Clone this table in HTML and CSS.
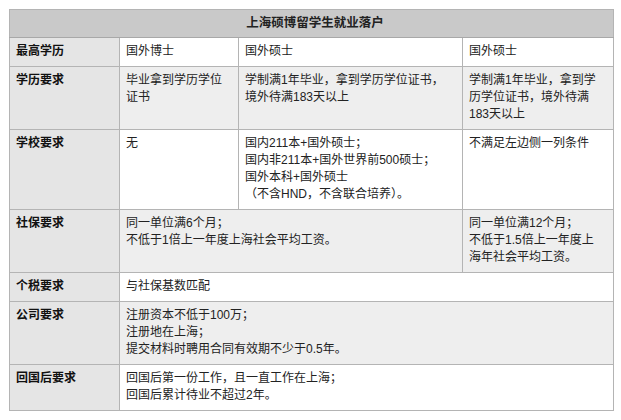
FILE: index.html
```html
<!DOCTYPE html>
<html lang="zh-CN">
<head>
<meta charset="utf-8">
<title>上海硕博留学生就业落户</title>
<link rel="stylesheet" href="styles.css">
</head>
<body>
<div class="page">
<table class="grid">
  <colgroup>
    <col class="c-label">
    <col class="c-phd">
    <col class="c-ms">
    <col class="c-other">
  </colgroup>
  <thead>
    <tr><th colspan="4" class="title">上海硕博留学生就业落户</th></tr>
  </thead>
  <tbody>
    <tr class="row-white">
      <th class="label">最高学历</th>
      <td>国外博士</td>
      <td>国外硕士</td>
      <td>国外硕士</td>
    </tr>
    <tr class="row-gray">
      <th class="label">学历要求</th>
      <td>毕业拿到学历学位<br>证书</td>
      <td>学制满1年毕业，拿到学历学位证书，<br>境外待满183天以上</td>
      <td>学制满1年毕业，拿到学<br>历学位证书，境外待满<br>183天以上</td>
    </tr>
    <tr class="row-white">
      <th class="label">学校要求</th>
      <td>无</td>
      <td>国内211本+国外硕士；<br>国内非211本+国外世界前500硕士；<br>国外本科+国外硕士<br>（不含HND，不含联合培养）。</td>
      <td>不满足左边侧一列条件</td>
    </tr>
    <tr class="row-gray">
      <th class="label">社保要求</th>
      <td colspan="2">同一单位满6个月；<br>不低于1倍上一年度上海社会平均工资。</td>
      <td>同一单位满12个月；<br>不低于1.5倍上一年度上<br>海年社会平均工资。</td>
    </tr>
    <tr class="row-white">
      <th class="label">个税要求</th>
      <td colspan="3">与社保基数匹配</td>
    </tr>
    <tr class="row-gray">
      <th class="label">公司要求</th>
      <td colspan="3">注册资本不低于100万；<br>注册地在上海；<br>提交材料时聘用合同有效期不少于0.5年。</td>
    </tr>
    <tr class="row-white">
      <th class="label">回国后要求</th>
      <td colspan="3">回国后第一份工作，且一直工作在上海；<br>回国后累计待业不超过2年。</td>
    </tr>
  </tbody>
</table>
</div>
</body>
</html>
```

FILE: styles.css
```css
html, body {
  margin: 0;
  padding: 0;
  background: #ffffff;
}

.page {
  padding: 9px 0 0 9px;
}

.grid {
  border-collapse: collapse;
  table-layout: fixed;
  width: 604px;
  font-family: "Liberation Sans", "Noto Sans CJK SC", sans-serif;
  font-size: 12px;
  line-height: 17px;
  color: #222222;
  border: 1px solid #b4b4b4;
}

.c-label { width: 110px; }
.c-phd { width: 119px; }
.c-ms { width: 224px; }
.c-other { width: 151px; }

.grid th,
.grid td {
  border: 1px solid #b4b4b4;
  padding: 5px 6px 6px 6px;
  text-align: left;
  vertical-align: top;
  font-weight: normal;
}

.grid .title {
  background: #c9c9c9;
  text-align: center;
  font-weight: bold;
  padding: 5px 0 5px 7px;
  font-size: 12.5px;
  border-bottom: 1px solid #a8a8a8;
}

.grid .label {
  background: #e5e5e5;
  font-weight: bold;
  color: #111111;
}

.row-white td {
  background: #ffffff;
}

.row-gray td {
  background: #eeeeee;
}
```
